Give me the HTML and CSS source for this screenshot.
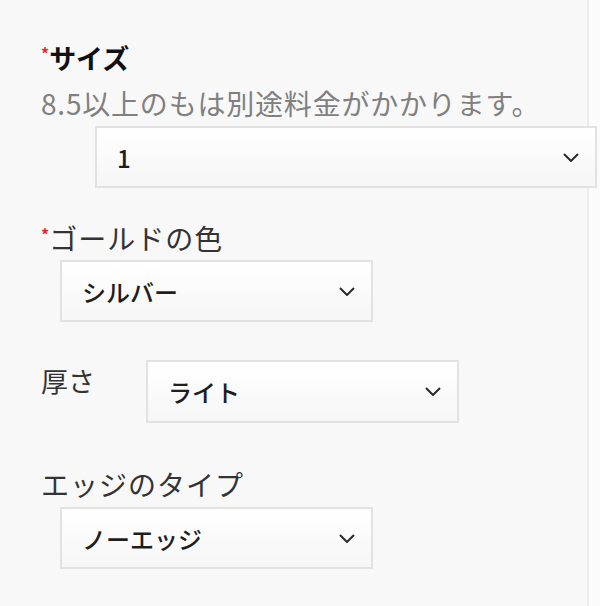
FILE: index.html
```html
<!DOCTYPE html>
<html lang="ja">
  <head>
    <meta charset="UTF-8" />
    <meta name="viewport" content="width=device-width, initial-scale=1" />
    <title>オプション</title>
    <link rel="stylesheet" href="styles.css">
  </head>
  <body>
    <div class="panel">
      <!-- サイズ -->
      <div class="field">
        <label class="field-label strong" for="size"><span class="req">*</span>サイズ</label>
        <p class="hint">8.5以上のもは別途料金がかかります。</p>
        <div class="select-box select-size">
          <select id="size">
            <option>1</option>
            <option>2</option>
            <option>3</option>
          </select>
          <svg class="chevron" viewBox="0 0 16 9" width="16" height="9"><polyline points="1,1 8,8 15,1" /></svg>
        </div>
      </div>

      <!-- ゴールドの色 -->
      <div class="field field-gold">
        <label class="field-label" for="gold"><span class="req">*</span>ゴールドの色</label>
        <div class="select-box">
          <select id="gold">
            <option>シルバー</option>
            <option>イエロー</option>
            <option>ローズ</option>
          </select>
          <svg class="chevron" viewBox="0 0 16 9" width="16" height="9"><polyline points="1,1 8,8 15,1" /></svg>
        </div>
      </div>

      <!-- 厚さ -->
      <div class="field field-row">
        <label class="field-label row-label" for="thick">厚さ</label>
        <div class="select-box">
          <select id="thick">
            <option>ライト</option>
            <option>ミディアム</option>
            <option>ヘビー</option>
          </select>
          <svg class="chevron" viewBox="0 0 16 9" width="16" height="9"><polyline points="1,1 8,8 15,1" /></svg>
        </div>
      </div>

      <!-- エッジのタイプ -->
      <div class="field field-edge">
        <label class="field-label" for="edge">エッジのタイプ</label>
        <div class="select-box">
          <select id="edge">
            <option>ノーエッジ</option>
            <option>ラウンド</option>
          </select>
          <svg class="chevron" viewBox="0 0 16 9" width="16" height="9"><polyline points="1,1 8,8 15,1" /></svg>
        </div>
      </div>
    </div>
  </body>
</html>
```

FILE: styles.css
```css
/* Global */
body {
  margin: 0;
  background-color: #fbfbfb;
  font-family: "Noto Sans CJK JP", "Noto Sans", sans-serif;
  color: #333;
}

/* Left column */
.panel {
  width: 589px;
  min-height: 606px;
  box-sizing: border-box;
  padding: 41px 0 0 41px;
  background-color: #f8f8f8;
  border-right: 2px solid #ececec;
}

.field-label {
  display: block;
  font-size: 28px;
  line-height: 34px;
  letter-spacing: 1px;
  color: #333;
}

.field-label.strong {
  font-size: 27px;
  font-weight: 700;
  letter-spacing: 0;
  color: #111;
}

.req {
  color: #e8262b;
  font-size: 16px;
  font-weight: 700;
  letter-spacing: 0;
  vertical-align: 9px;
  line-height: 0;
}

.hint {
  margin: 11px 0 0;
  font-size: 28px;
  line-height: 34px;
  letter-spacing: 0.8px;
  color: #808080;
}

/* Select boxes */
.select-box {
  position: relative;
  width: 313px;
  height: 62px;
  margin: 5px 0 0 19px;
}

.select-size {
  width: 502px;
  margin: 6px 0 0 54px;
}

.select-box select {
  width: 100%;
  height: 100%;
  appearance: none;
  -webkit-appearance: none;
  box-sizing: border-box;
  padding: 0 50px 0 20px;
  border: 2px solid #e2e2e2;
  border-radius: 0;
  background: linear-gradient(#ffffff, #f6f6f6);
  font-family: inherit;
  font-size: 24px;
  font-weight: 500;
  color: #1e1e1e;
  outline: none;
}

.chevron {
  position: absolute;
  right: 18px;
  top: 27px;
  fill: none;
  stroke: #2a2a2a;
  stroke-width: 2;
  pointer-events: none;
}

.field-gold {
  margin-top: 33px;
}

/* Label beside select */
.field-row {
  display: flex;
  align-items: flex-start;
  margin-top: 38px;
}

.row-label {
  width: 105px;
  margin-top: 4px;
  font-size: 27px;
  letter-spacing: 0;
}

.field-row .select-box {
  margin: 0;
  height: 63px;
}

.field-edge {
  margin-top: 44px;
}

.field-edge .select-box {
  margin-top: 6px;
}
```
